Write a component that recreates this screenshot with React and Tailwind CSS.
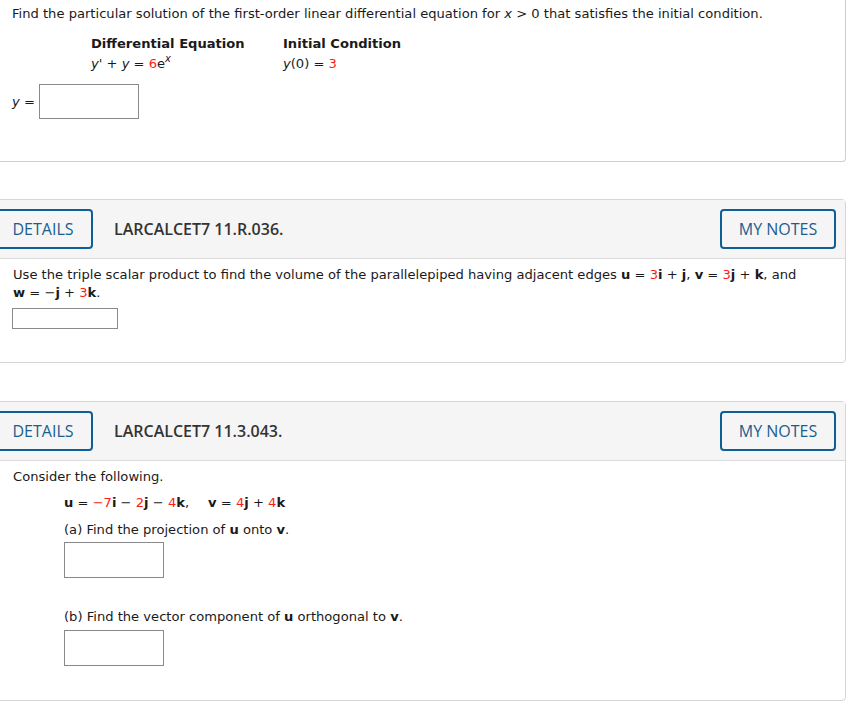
import React from "react";

const red = "text-[#ff1a1a]";

function Header({ code }) {
  return (
    <div className="flex items-center justify-between bg-[#f5f5f5] border-b border-[#dcdcdc] pt-[9px] pb-[9px] pr-[9px]">
      <div className="flex items-center">
        <button className="w-[100px] h-[40px] border-2 border-[#0e5f96] rounded-[4px] text-[#1b5d8f] text-[16px] font-['Open_Sans',sans-serif]">
          DETAILS
        </button>
        <span className="ml-[21px] text-[16px] font-semibold text-[#333] font-['Open_Sans',sans-serif]">
          {code}
        </span>
      </div>
      <button className="w-[116px] h-[40px] border-2 border-[#0e5f96] rounded-[4px] text-[#1b5d8f] text-[16px] font-['Open_Sans',sans-serif]">
        MY NOTES
      </button>
    </div>
  );
}

function Box({ w, h }) {
  return <div className={`border border-[#8a8a8a] bg-white ${w} ${h}`} />;
}

export default function App() {
  return (
    <div className="w-[851px] h-[701px] bg-white overflow-hidden font-['DejaVu_Sans',Verdana,sans-serif] text-[13.1px] text-[#1a1a1a] leading-[18px]">
      <div className="w-[854px] -ml-[8px]">
        {/* Question 1 */}
        <div className="border-b border-r border-[#cfcfcf] rounded-br-[4px] pl-[20px] pt-[5px] pb-[42px]">
          <p>
            Find the particular solution of the first-order linear differential equation for <i>x</i> &gt; 0 that satisfies the initial condition.
          </p>
          <table className="mt-[11px] ml-[79px] leading-[20px]">
            <tbody>
              <tr className="font-bold">
                <td className="w-[192px]">Differential Equation</td>
                <td>Initial Condition</td>
              </tr>
              <tr>
                <td>
                  <i>y</i>' + <i>y</i> = <span className={red}>6</span>e
                  <sup className="italic text-[10px] -top-[6px]">x</sup>
                </td>
                <td>
                  <i>y</i>(0) = <span className={red}>3</span>
                </td>
              </tr>
            </tbody>
          </table>
          <div className="mt-[10px] flex items-center">
            <span className="w-[27px]">
              <i>y</i> =
            </span>
            <Box w="w-[100px]" h="h-[35px]" />
          </div>
        </div>

        {/* Question 2 */}
        <div className="mt-[37px] border border-[#d6d6d6] rounded-r-[4px]">
          <Header code="LARCALCET7 11.R.036." />
          <div className="pl-[20px] pt-[7px] pb-[33px]">
            <p>
              Use the triple scalar product to find the volume of the parallelepiped having adjacent edges <b>u</b> = <span className={red}>3</span><b>i</b> + <b>j</b>, <b>v</b> = <span className={red}>3</span><b>j</b> + <b>k</b>, and
              <br />
              <b>w</b> = −<b>j</b> + <span className={red}>3</span><b>k</b>.
            </p>
            <div className="mt-[6px] -ml-[1px]">
              <Box w="w-[106px]" h="h-[21px]" />
            </div>
          </div>
        </div>

        {/* Question 3 */}
        <div className="mt-[38px] border border-[#d6d6d6] rounded-r-[4px]">
          <Header code="LARCALCET7 11.3.043." />
          <div className="pl-[20px] pt-[7px] pb-[34px]">
            <p>Consider the following.</p>
            <div className="pl-[51px]">
              <p className="mt-[8px]">
                <b>u</b> = <span className={red}>−7</span><b>i</b> − <span className={red}>2</span><b>j</b> − <span className={red}>4</span><b>k</b>,
                <span className="inline-block w-[19px]" />
                <b>v</b> = <span className={red}>4</span><b>j</b> + <span className={red}>4</span><b>k</b>
              </p>
              <p className="mt-[9px]">
                (a) Find the projection of <b>u</b> onto <b>v</b>.
              </p>
              <div className="mt-[3px]">
                <Box w="w-[100px]" h="h-[36px]" />
              </div>
              <p className="mt-[30px]">
                (b) Find the vector component of <b>u</b> orthogonal to <b>v</b>.
              </p>
              <div className="mt-[4px]">
                <Box w="w-[100px]" h="h-[36px]" />
              </div>
            </div>
          </div>
        </div>
      </div>
    </div>
  );
}
